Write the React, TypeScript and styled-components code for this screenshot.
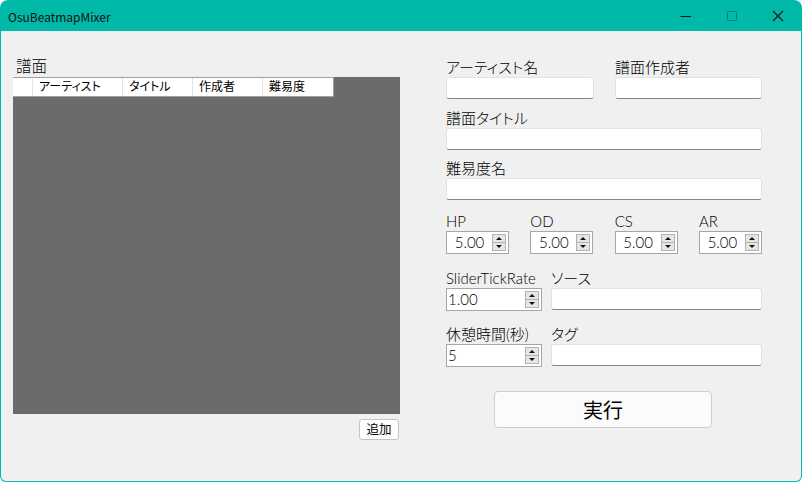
import React from "react";
import styled, { createGlobalStyle } from "styled-components";

const Global = createGlobalStyle`
  html, body { margin: 0; padding: 0; background: #ffffff; }
  * { box-sizing: border-box; }
  body { font-family: "Lato", "Noto Sans CJK JP", sans-serif; font-feature-settings: "palt"; }
`;

const TEAL = "#00B9A9";

const Window = styled.div`
  width: 802px;
  height: 482px;
  display: flex;
  flex-direction: column;
  background: ${TEAL};
  border-radius: 8px 8px 6px 6px;
  padding: 0 1px 1px 1px;
  overflow: hidden;
`;

const TitleBar = styled.div`
  height: 31px;
  flex: none;
  display: flex;
  align-items: center;
  padding-left: 7px;
`;

const Title = styled.div`
  flex: 1;
  font-family: "Noto Sans CJK JP", sans-serif;
  font-size: 12px;
  color: #111;
  padding-top: 1px;
`;

const Caption = styled.div<{ $disabled?: boolean }>`
  width: 46px;
  height: 31px;
  display: flex;
  align-items: center;
  justify-content: center;
  color: ${(p) => (p.$disabled ? "#16786d" : "#111")};
`;

const Body = styled.div`
  flex: 1;
  background: #f0f0f0;
  border-radius: 0 0 5px 5px;
  display: flex;
  padding: 25px 39px 0 12px;
  gap: 46px;
`;

const LeftCol = styled.div`
  width: 387px;
  display: flex;
  flex-direction: column;
`;

const SectionLabel = styled.div`
  height: 21px;
  line-height: 21px;
  padding-left: 3px;
  font-size: 15.5px;
  font-weight: 300;
  color: #000;
`;

const Grid = styled.div`
  height: 337px;
  background: #6b6b6b;
`;

const HeaderRow = styled.div`
  display: flex;
  height: 20px;
  width: 321px;
  background: #fff;
  border-top: 1px solid #a0a0a0;
  border-bottom: 1px solid #a0a0a0;
  border-right: 1px solid #a0a0a0;
`;

const HeaderCell = styled.div<{ $w: number }>`
  width: ${(p) => p.$w}px;
  flex: none;
  border-right: 1px solid #e3e3e3;
  font-size: 12px;
  line-height: 18px;
  padding-left: 6px;
  color: #000;
  &:last-child { border-right: none; }
`;

const AddRow = styled.div`
  display: flex;
  justify-content: flex-end;
  padding-right: 1px;
  margin-top: 5px;
`;

const SmallButton = styled.div`
  width: 40px;
  height: 21px;
  border: 1px solid #c4c4c4;
  border-radius: 3px;
  background: #fdfdfd;
  font-size: 12.5px;
  line-height: 19px;
  text-align: center;
  color: #000;
`;

const RightCol = styled.div`
  width: 316px;
  display: flex;
  flex-direction: column;
  padding-top: 1px;
`;

const Row = styled.div<{ $cols: string; $gap?: string; $mt?: number }>`
  display: grid;
  grid-template-columns: ${(p) => p.$cols};
  column-gap: ${(p) => p.$gap ?? "0px"};
  justify-content: space-between;
  margin-top: ${(p) => p.$mt ?? 0}px;
`;

const Field = styled.div`
  display: flex;
  flex-direction: column;
  min-width: 0;
`;

const Label = styled.div`
  height: 20px;
  line-height: 20px;
  font-size: 15px;
  font-weight: 300;
  color: #000;
  white-space: nowrap;
`;

const TextBox = styled.div<{ $h?: number }>`
  height: ${(p) => p.$h ?? 22}px;
  background: #fff;
  border: 1px solid #e2e2e2;
  border-bottom: 1px solid #858585;
  border-radius: 3px;
`;

const NumBox = styled.div`
  height: 23px;
  background: #fff;
  border: 1px solid #a6a6a6;
  display: flex;
  align-items: center;
  padding-right: 1px;
`;

const NumText = styled.div<{ $align: "center" | "left" }>`
  flex: 1;
  font-family: "Lato", sans-serif;
  font-size: 15px;
  font-weight: 300;
  line-height: 21px;
  color: #000;
  text-align: ${(p) => p.$align};
  padding-left: ${(p) => (p.$align === "left" ? 1 : 0)}px;
`;

const Spin = styled.div`
  width: 14px;
  height: 17px;
  display: flex;
  flex-direction: column;
  border: 1px solid #b3b3b3;
  background: #e6e6e6;
  margin-right: 1px;
`;

const SpinHalf = styled.div<{ $up?: boolean }>`
  flex: 1;
  display: flex;
  align-items: center;
  justify-content: center;
  border-top: ${(p) => (p.$up ? "none" : "1px solid #b3b3b3")};
  &::before {
    content: "";
    width: 0;
    height: 0;
    border-left: 3px solid transparent;
    border-right: 3px solid transparent;
    ${(p) =>
      p.$up ? "border-bottom: 3px solid #111;" : "border-top: 3px solid #111;"}
  }
`;

const RunRow = styled.div`
  display: flex;
  margin-top: 24px;
  padding-left: 48px;
`;

const RunButton = styled.div`
  width: 218px;
  height: 37px;
  border: 1px solid #cdcdcd;
  border-radius: 4px;
  background: #fbfbfb;
  font-family: "Noto Sans CJK JP", sans-serif;
  font-size: 20px;
  line-height: 35px;
  text-align: center;
  color: #000;
`;

const NumericUpDown = ({ value, align }: { value: string; align: "center" | "left" }) => (
  <NumBox>
    <NumText $align={align}>{value}</NumText>
    <Spin>
      <SpinHalf $up />
      <SpinHalf />
    </Spin>
  </NumBox>
);

export default function App() {
  return (
    <>
      <Global />
      <Window>
        <TitleBar>
          <Title>OsuBeatmapMixer</Title>
          <Caption>
            <svg width="12" height="12" viewBox="0 0 12 12">
              <path d="M0.5 6.5H11" stroke="currentColor" strokeWidth="1" />
            </svg>
          </Caption>
          <Caption $disabled>
            <svg width="12" height="12" viewBox="0 0 12 12">
              <rect x="1.5" y="1.5" width="9" height="9" rx="1" fill="none" stroke="currentColor" strokeWidth="1" />
            </svg>
          </Caption>
          <Caption>
            <svg width="12" height="12" viewBox="0 0 12 12">
              <path d="M1 1L11 11M11 1L1 11" stroke="currentColor" strokeWidth="1.1" />
            </svg>
          </Caption>
        </TitleBar>
        <Body>
          <LeftCol>
            <SectionLabel>譜面</SectionLabel>
            <Grid>
              <HeaderRow>
                <HeaderCell $w={20} />
                <HeaderCell $w={90}>アーティスト</HeaderCell>
                <HeaderCell $w={70}>タイトル</HeaderCell>
                <HeaderCell $w={70}>作成者</HeaderCell>
                <HeaderCell $w={70}>難易度</HeaderCell>
              </HeaderRow>
            </Grid>
            <AddRow>
              <SmallButton>追加</SmallButton>
            </AddRow>
          </LeftCol>
          <RightCol>
            <Row $cols="148px 147px" $gap="21px">
              <Field>
                <Label>アーティスト名</Label>
                <TextBox />
              </Field>
              <Field>
                <Label>譜面作成者</Label>
                <TextBox />
              </Field>
            </Row>
            <Row $cols="1fr" $mt={9}>
              <Field>
                <Label>譜面タイトル</Label>
                <TextBox />
              </Field>
            </Row>
            <Row $cols="1fr" $mt={8}>
              <Field>
                <Label>難易度名</Label>
                <TextBox />
              </Field>
            </Row>
            <Row $cols="63px 63px 63px 63px" $mt={11}>
              <Field>
                <Label>HP</Label>
                <NumericUpDown value="5.00" align="center" />
              </Field>
              <Field>
                <Label>OD</Label>
                <NumericUpDown value="5.00" align="center" />
              </Field>
              <Field>
                <Label>CS</Label>
                <NumericUpDown value="5.00" align="center" />
              </Field>
              <Field>
                <Label>AR</Label>
                <NumericUpDown value="5.00" align="center" />
              </Field>
            </Row>
            <Row $cols="96px 211px" $gap="9px" $mt={14}>
              <Field>
                <Label>SliderTickRate</Label>
                <NumericUpDown value="1.00" align="left" />
              </Field>
              <Field>
                <Label>ソース</Label>
                <TextBox />
              </Field>
            </Row>
            <Row $cols="96px 211px" $gap="9px" $mt={13}>
              <Field>
                <Label>休憩時間(秒)</Label>
                <NumericUpDown value="5" align="left" />
              </Field>
              <Field>
                <Label>タグ</Label>
                <TextBox />
              </Field>
            </Row>
            <RunRow>
              <RunButton>実行</RunButton>
            </RunRow>
          </RightCol>
        </Body>
      </Window>
    </>
  );
}
